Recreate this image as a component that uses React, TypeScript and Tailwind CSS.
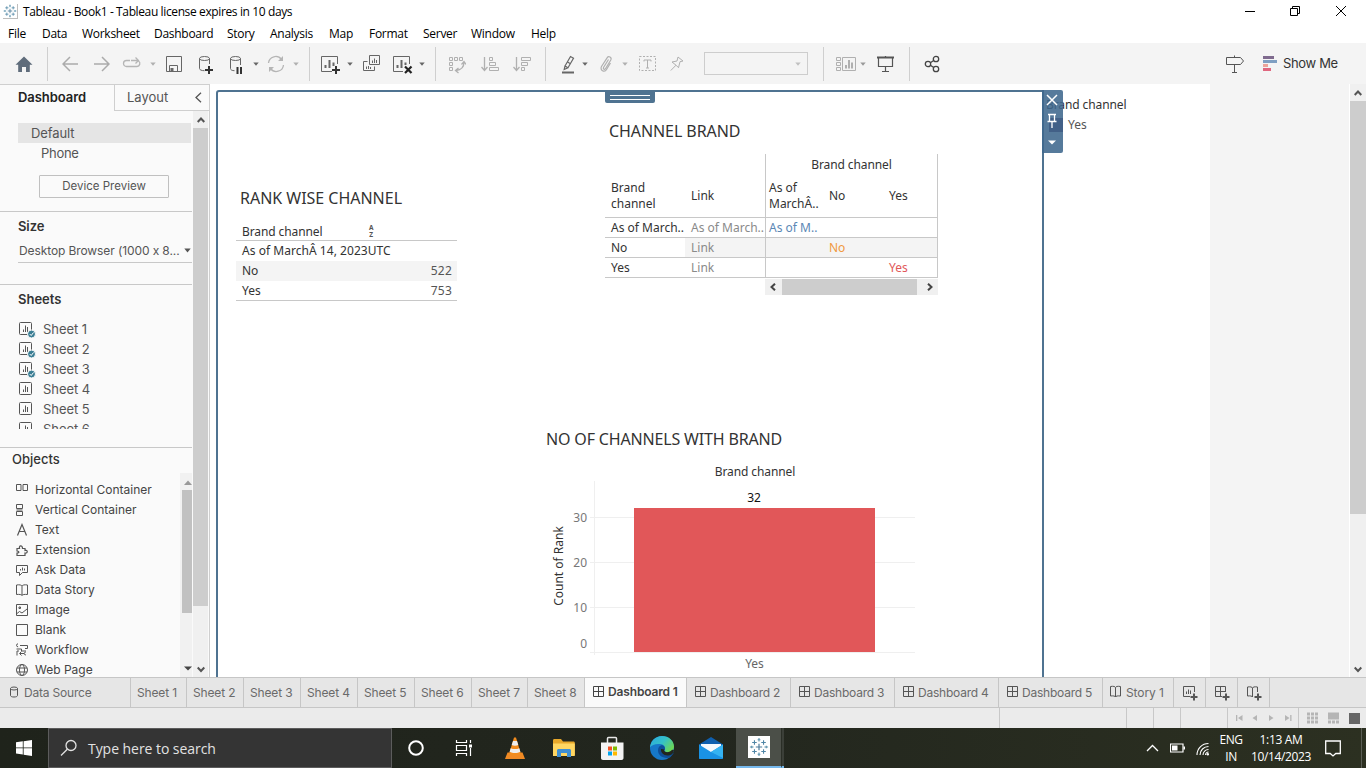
import type { ReactNode } from "react";

type IconProps = { w: number; h?: number; className?: string; children: ReactNode };

function Icon({ w, h = 20, className = "", children }: IconProps) {
  return (
    <svg
      width={w}
      height={h}
      viewBox={`0 0 ${w} ${h}`}
      fill="none"
      stroke="currentColor"
      strokeWidth={1}
      className={`block shrink-0 ${className}`}
    >
      {children}
    </svg>
  );
}

function Caret({ className = "" }: { className?: string }) {
  return (
    <Icon w={6} h={4} className={className}>
      <path d="M.3.5h5.4L3 3.7z" fill="currentColor" stroke="none" />
    </Icon>
  );
}

function Sep({ className = "" }: { className?: string }) {
  return <div className={`h-[34px] w-px shrink-0 bg-[#cfcfcf] ${className}`} />;
}

function Plus({ x, y }: { x: number; y: number }) {
  return <path d={`M${x - 4} ${y}h8M${x} ${y - 4}v8`} strokeWidth={2} stroke="#333" />;
}

function TableauMark({ size, className = "" }: { size: number; className?: string }) {
  return (
    <svg width={size} height={size} viewBox="0 0 22 22" fill="none" className={`block shrink-0 ${className}`}>
      <path d="M11 7.500v7M7.500 11h7" stroke="#4a7a9a" strokeWidth="1.300" />
      <path d="M11 1v4M9.500 3h3M11 17v4M9.500 19h3M1 11h4M3 9.500v3M17 11h4M19 9.500v3" stroke="#5d93ad" strokeWidth="1.200" />
      <path d="M6 3.500v5M3.500 6h5M16 3.500v5M13.500 6h5M6 13.500v5M3.500 16h5M16 13.500v5M13.500 16h5" stroke="#4f86a6" strokeWidth="1.200" />
    </svg>
  );
}

function TitleBar() {
  return (
    <header className="flex h-[22px] shrink-0 items-center bg-white pl-[3px]">
      <div className="flex size-[15px] items-center justify-center border-r border-b border-[#bdbdbd]">
        <TableauMark size={14} />
      </div>
      <div className="ml-[5px] pt-px font-[Open_Sans,sans-serif] text-[12px] tracking-[-0.38px] whitespace-nowrap text-black">
        Tableau - Book1 - Tableau license expires in 10 days
      </div>
      <div className="ml-auto flex items-center pr-[20px] text-black">
        <Icon w={10} h={12}>
          <path d="M0 6.500h10" />
        </Icon>
        <Icon w={10} h={12} className="ml-[35px]">
          <path d="M.5 3.500h7v7h-7zM2.500 3.500v-2h7v7h-2" />
        </Icon>
        <Icon w={10} h={12} className="ml-[36px]">
          <path d="M0 1l10 10M10 1L0 11" />
        </Icon>
      </div>
    </header>
  );
}

const MENU: [string, string][] = [
  ["File", "w-[34px]"],
  ["Data", "w-[40px]"],
  ["Worksheet", "w-[72px]"],
  ["Dashboard", "w-[73px]"],
  ["Story", "w-[43px]"],
  ["Analysis", "w-[59px]"],
  ["Map", "w-[40px]"],
  ["Format", "w-[54px]"],
  ["Server", "w-[48px]"],
  ["Window", "w-[60px]"],
  ["Help", "w-[40px]"],
];

function MenuBar() {
  return (
    <nav className="flex h-[21px] shrink-0 items-center bg-white pt-[2px] pl-[8px] font-[Open_Sans,sans-serif] text-[12px] tracking-[-0.28px] text-black">
      {MENU.map(([label, w]) => (
        <div key={label} className={`shrink-0 whitespace-nowrap ${w}`}>
          {label}
        </div>
      ))}
    </nav>
  );
}

function Toolbar() {
  return (
    <div className="flex h-[41px] shrink-0 items-center bg-[#f4f4f4] pt-px text-[#666]">
      <Icon w={20} className="ml-[14px] text-[#5f6c7b]">
        <path d="M10 2.500l8.500 8.200h-2.700v7.300h-3.800v-5h-4v5h-3.800v-7.300h-2.700z" fill="currentColor" stroke="none" />
      </Icon>
      <Sep className="ml-[13px]" />
      <Icon w={16} className="ml-[14px] text-[#ababab]">
        <path d="M16 10H1M8 3l-7 7 7 7" strokeWidth={1.500} />
      </Icon>
      <Icon w={16} className="ml-[16px] text-[#ababab]">
        <path d="M0 10h15M8 3l7 7-7 7" strokeWidth={1.500} />
      </Icon>
      <Icon w={20} className="ml-[12px] text-[#b5b5b5]">
        <path d="M8 6.500H4.500a3 3 0 0 0 0 6H15a3 3 0 0 0 1.500-5.500M9 6.500h7M13.500 3.500l3 3-3 3" strokeWidth={1.300} />
      </Icon>
      <Caret className="ml-[8px] text-[#b0b0b0]" />
      <Icon w={16} className="ml-[10px]">
        <path d="M.5 2.500h15v15H.5zM3.500 17v-5.500h8V17" />
        <path d="M4.500 14h3v3h-3z" fill="currentColor" stroke="none" />
      </Icon>
      <Icon w={16} className="ml-[16px]">
        <path d="M1.500 4.500v10c0 1.300 2 2.200 5 2.200M11.500 4.500V10" />
        <ellipse cx="6.500" cy="4.500" rx="5" ry="2" />
        <Plus x={11} y={16} />
      </Icon>
      <Icon w={14} className="ml-[15px]">
        <path d="M1.500 4.500v10c0 1.300 1.500 2.200 4 2.200M11.500 4.500V11" />
        <ellipse cx="6.500" cy="4.500" rx="5" ry="2" />
        <path d="M8.500 13v7M12 13v7" stroke="#333" strokeWidth={2} />
      </Icon>
      <Caret className="ml-[10px] text-[#666]" />
      <Icon w={18} className="ml-[8px] text-[#b5b5b5]">
        <path d="M1.500 9A7.200 7.200 0 0 1 14.500 5.500M16.500 11A7.200 7.200 0 0 1 3.500 14.500" strokeWidth={1.300} />
        <path d="M16 2v5h-5zM2 18v-5h5z" fill="currentColor" stroke="none" />
      </Icon>
      <Caret className="ml-[8px] text-[#b0b0b0]" />
      <Sep className="ml-[10px]" />
      <Icon w={20} className="ml-[11px]">
        <path d="M16.500 10V2.500H.500v15H11" />
        <path d="M4.500 14v-3M8.500 14V6M12.500 12V8.500" strokeWidth={2} />
        <Plus x={15} y={16} />
      </Icon>
      <Caret className="ml-[6px] text-[#666]" />
      <Icon w={18} className="ml-[10px]">
        <path d="M6.500 1.500h10v9h-10zM4.500 7.500h-4v9h11v-4" />
        <path d="M9.500 9V6.500M11.500 9V4.500M13.500 9V6M3.500 15v-2.500M5.500 15v-3M7.500 15v-2" />
      </Icon>
      <Icon w={20} className="ml-[12px]">
        <path d="M16.500 10V2.500H.500v15H10" />
        <path d="M4.500 14v-3M8.500 14V6M12.500 11V8.500" strokeWidth={2} />
        <path d="M12 12.500l6.500 6.500M18.500 12.500L12 19" stroke="#222" strokeWidth={2.200} />
      </Icon>
      <Caret className="ml-[6px] text-[#666]" />
      <Sep className="ml-[10px]" />
      <Icon w={18} className="ml-[12px] text-[#b0b0b0]">
        <path d="M1.500 3.500h3v3h-3zM6.500 3.500h3v3h-3zM11.500 3.500h3v3h-3zM1.500 8.500h3v3h-3zM1.500 13.500h3v3h-3z" />
        <path d="M16 8c0 5-3 8-8 8.500M13.500 10.500L16 7.500l2 3M10.500 14l-3 2.500 3 2.500" strokeWidth={1.300} />
      </Icon>
      <Icon w={18} className="ml-[15px] text-[#b0b0b0]">
        <path d="M3.500 3v13.500M.500 13l3 3.500 3-3.500" strokeWidth={1.300} />
        <path d="M8.500 3.500h3v3h-3zM8.500 8.500h6v3h-6zM8.500 13.500h9v3h-9z" />
      </Icon>
      <Icon w={18} className="ml-[14px] text-[#b0b0b0]">
        <path d="M3.500 3v13.500M.500 13l3 3.500 3-3.500" strokeWidth={1.300} />
        <path d="M8.500 3.500h9v3h-9zM8.500 8.500h6v3h-6zM8.500 13.500h3v3h-3z" />
      </Icon>
      <Sep className="ml-[14px]" />
      <Icon w={14} className="ml-[15px]">
        <path d="M4 12l5.500-9.500 3 1.700L7 13.700zM4 12l-.800 3.500 3.800-1.800M6.500 8l3 1.700" strokeWidth={1.200} />
        <path d="M1 18.500h12" strokeWidth={2} />
      </Icon>
      <Caret className="ml-[7px] text-[#666]" />
      <Icon w={14} className="ml-[11px] text-[#b0b0b0]">
        <path
          d="M9.500 5.500L4.500 13.500c-.7 1.500 1.200 2.500 2.100 1l5.200-8.500c1.300-2.700-2.200-4.500-3.700-2.200L2.500 12.500c-2 3.700 3 6.500 5.200 2.700l3.800-6.200"
          strokeWidth={1.200}
        />
      </Icon>
      <Caret className="ml-[9px] text-[#b0b0b0]" />
      <Icon w={18} className="ml-[11px] text-[#b0b0b0]">
        <path d="M.500 2.500h16v14H.500z" strokeDasharray="2 1.500" />
        <path d="M5 7.500V6h7v1.500M8.500 6v8M7 14h3" />
      </Icon>
      <Icon w={14} className="ml-[13px] text-[#b0b0b0]">
        <path d="M8 3l5 4-3 .700-1.500 6L6 11.200.800 16.500M6 11.200L2 8l5-1 1-4" />
      </Icon>
      <div className="mb-px ml-[20px] flex h-[23px] w-[104px] shrink-0 items-center justify-end border border-[#cdcdcd] pr-[6px]">
        <Caret className="text-[#c0c0c0]" />
      </div>
      <Sep className="ml-[15px]" />
      <Icon w={20} className="ml-[12px] text-[#b0b0b0]">
        <path d="M.500 3.500h4v3h-4zM.500 8.500h4v3h-4zM.500 13.500h4v3h-4zM6.500 3.500h13v13h-13z" />
        <path d="M10 14.500V11M13 14.500V6M16 14.500V8.500" strokeWidth={2} />
      </Icon>
      <Caret className="ml-[4px] text-[#999]" />
      <Icon w={18} className="ml-[11px] text-[#555]">
        <path d="M0 3.500h17" strokeWidth={2} />
        <path d="M1.500 4v8.500h14V4M8.500 12.500v5M5 17.500h7M8.500 2v1" strokeWidth={1.200} />
      </Icon>
      <Sep className="ml-[14px]" />
      <Icon w={18} className="ml-[14px] text-[#444]">
        <circle cx="4" cy="10" r="2.700" strokeWidth={1.300} />
        <circle cx="12" cy="5" r="2.700" strokeWidth={1.300} />
        <circle cx="12" cy="15" r="2.700" strokeWidth={1.300} />
        <path d="M6.400 8.700l3.300-2.200M6.400 11.300l3.300 2.200" strokeWidth={1.300} />
      </Icon>
      <Icon w={18} className="ml-[284px] text-[#555]">
        <path d="M.500 3.500h14l3 3.500-3 3.500H.500zM8.500 1.500v2M8.500 10.500v8M6 18.500h5" />
      </Icon>
      <Icon w={14} className="ml-[19px]">
        <path d="M0 3.500h11" stroke="#7f6a8e" strokeWidth={3} />
        <path d="M0 7.500h14" stroke="#7f9fc2" strokeWidth={3} />
        <path d="M0 11.500h5" stroke="#eba49a" strokeWidth={3} />
        <path d="M0 15.500h8" stroke="#e0677f" strokeWidth={3} />
      </Icon>
      <div className="ml-[6px] font-[Inter,sans-serif] text-[13px] tracking-[-0.35px] whitespace-nowrap text-[#333]">Show Me</div>
    </div>
  );
}

function SheetIcon({ checked }: { checked?: boolean }) {
  return (
    <Icon w={18} h={18} className="text-[#555]">
      <rect x=".500" y="2.500" width="12" height="12" rx="1" />
      <path d="M4.500 12V9.500M6.500 12V5.500M8.500 12V7" />
      {checked && (
        <>
          <circle cx="12.500" cy="14" r="4" fill="#3a7d93" stroke="#fafafa" />
          <path d="M10.700 14l1.500 1.500 2.300-3" stroke="#fff" />
        </>
      )}
    </Icon>
  );
}

const OBJECTS: [string, ReactNode][] = [
  ["Horizontal Container", <path key="p" d="M.500 1.500h4.500v6H.500zM7 1.500h4.500v6H7z" />],
  ["Vertical Container", <path key="p" d="M.500 1.500h6v4h-6zM.500 8.500h6v4h-6zM.500 7h6" />],
  ["Text", <path key="p" d="M1.500 12.500L6 1.500l4.500 11M3 8.500h6" strokeWidth={1.200} />],
  ["Extension", <path key="p" d="M1 5.500h2.500c-1-3 3-4 3 0H9V7.500c3-1 3 3 0 2.500v2.500H1V10c2.500 0 2.500-2 0-2z" strokeWidth={1.200} />],
  ["Ask Data", <path key="p" d="M.500 2.500h11v7h-5l-3 3v-3h-3zM4.500 7.500V6M6.500 7.500V4.500M8.500 7.500V5.500" />],
  ["Data Story", <path key="p" d="M.500 2c3-.500 5 0 5.500 1 .500-1 2.500-1.500 5.500-1v9.500c-3-.300-5 0-5.500 1-.500-1-2.500-1.300-5.500-1zM6 3v9.500" />],
  ["Image", <path key="p" d="M.500 1.500h11v11H.500zM1 10.500l2.500-2 2.500 1.500L11 6M3 4h1.500v1.500H3z" />],
  ["Blank", <path key="p" d="M.500 1.500h11v11H.500z" />],
  ["Workflow", <path key="p" d="M4 2.500h7.500v3H9M.500 6h5v2H10M1 12.500V8h2M2 .800a1.500 1.500 0 1 0 .1 3M5.500 12.500l-2-2 2-2M4 10.500h4M9.800 9a1.500 1.500 0 1 0 .1 3" />],
  [
    "Web Page",
    <g key="p">
      <circle cx="6" cy="7" r="5.500" />
      <ellipse cx="6" cy="7" rx="2.500" ry="5.500" />
      <path d="M1 5h10M1 9h10" />
    </g>,
  ],
];

function Chevron({ d, className = "" }: { d: string; className?: string }) {
  return (
    <Icon w={8} h={8} className={className}>
      <path d={d} strokeWidth={2} />
    </Icon>
  );
}

const UP = "M.700 6L4 2.500 7.300 6";
const DOWN = "M.700 2.500L4 6l3.300-3.500";

function Sidebar() {
  return (
    <aside className="flex w-[210px] shrink-0 flex-col border-t border-r border-[#cfcfcf] bg-[#fafafa] font-[Inter,sans-serif] text-[#555]">
      <div className="flex h-[26px] shrink-0 text-[13px]">
        <div className="w-[114px] pl-[18px] leading-[25px] font-semibold tracking-[-0.05px] text-[#222]">Dashboard</div>
        <div className="flex flex-1 items-center border-b border-l border-[#cfcfcf] pr-[7px] pl-[12px]">
          <span className="leading-[25px]">Layout</span>
          <Icon w={7} h={11} className="ml-auto text-[#555]">
            <path d="M6 .800L1 5.500l5 4.700" strokeWidth={1.300} />
          </Icon>
        </div>
      </div>
      <div className="flex min-h-0 flex-1">
        <div className="flex w-[192px] shrink-0 flex-col overflow-hidden">
          <div className="mt-[12px] mr-px ml-[18px] h-[20px] shrink-0 bg-[#e5e5e5] pl-[13px] text-[13px] leading-[20px] tracking-[-0.1px]">
            Default
          </div>
          <div className="h-[20px] shrink-0 pl-[41px] text-[13px] leading-[20px] tracking-[-0.3px]">Phone</div>
          <div className="mt-[12px] ml-[39px] h-[23px] w-[130px] shrink-0 rounded-[1px] border border-[#c0c0c0] text-center text-[11.500px] leading-[20px]">
            Device Preview
          </div>
          <div className="mt-[13px] h-px shrink-0 bg-[#c8c8c8]" />
          <div className="mt-[4px] mb-px h-[20px] shrink-0 pl-[18px] text-[13px] leading-[20px] font-semibold tracking-[-0.1px] text-[#333]">
            Size
          </div>
          <div className="ml-[18px] flex h-[26px] shrink-0 items-center justify-between border-b border-[#c8c8c8] pt-[2px] pl-[1px] text-[12px]">
            <span className="tracking-[-0.1px] whitespace-nowrap [font-feature-settings:'calt'_0]">Desktop Browser (1000 x 8...</span>
            <Icon w={8} h={5}>
              <path d="M.300.500h6.400L3.500 4.500z" fill="currentColor" stroke="none" />
            </Icon>
          </div>
          <div className="mt-[21px] h-px shrink-0 bg-[#c8c8c8]" />
          <div className="mt-[4px] mb-px h-[20px] shrink-0 pl-[18px] text-[13px] leading-[20px] font-semibold text-[#333]">Sheets</div>
          <div className="mt-[9px] h-[110px] shrink-0 overflow-hidden">
            {[1, 2, 3, 4, 5, 6].map((n) => (
              <div key={n} className="flex h-[20px] items-center pl-[19px] text-[13px]">
                <SheetIcon checked={n < 4} />
                <span className="ml-[6px] leading-[20px] tracking-[-0.05px]">Sheet {n}</span>
              </div>
            ))}
          </div>
          <div className="mt-[18px] h-px shrink-0 bg-[#c8c8c8]" />
          <div className="mt-px mb-px h-[20px] shrink-0 pl-[12px] text-[13px] leading-[20px] font-medium text-[#333]">Objects</div>
          <div className="mt-[3px] flex min-h-0 flex-1">
            <div className="mt-[7px] flex-1 overflow-hidden text-[#444]">
              {OBJECTS.map(([label, icon]) => (
                <div key={label} className="flex h-[20px] items-center pl-[16px] text-[12px]">
                  <Icon w={13} h={14} className="text-[#555]">
                    {icon}
                  </Icon>
                  <span className="ml-[6px] leading-[20px] whitespace-nowrap">{label}</span>
                </div>
              ))}
            </div>
            <div className="flex w-[12px] shrink-0 flex-col items-end bg-[#f1f1f1]">
              <Icon w={8} h={5} className="mt-[7px] text-[#999]">
                <path d="M0 5l4-4.500L8 5z" fill="currentColor" stroke="none" />
              </Icon>
              <div className="mt-[5px] h-[123px] w-[10px] bg-[#c1c1c1]" />
              <Icon w={8} h={5} className="mt-auto mb-[6px] text-[#444]">
                <path d="M0 .500h8L4 4.500z" fill="currentColor" stroke="none" />
              </Icon>
            </div>
          </div>
        </div>
        <div className="ml-px flex w-[15px] flex-col items-center bg-[#f0f0f0]">
          <Chevron d={UP} className="mt-[5px] text-[#555]" />
          <div className="mt-[4px] h-[478px] w-full bg-[#cdcdcd]" />
          <Chevron d={DOWN} className="mt-auto mb-[4px] text-[#555]" />
        </div>
      </div>
    </aside>
  );
}

function RankTable() {
  return (
    <section className="mt-[104px] ml-[26px] w-[221px] shrink-0 text-[12px]">
      <h2 className="h-[20px] pl-[4px] text-[16px] leading-[20px] tracking-[-0.02px] whitespace-nowrap">RANK WISE CHANNEL</h2>
      <div className="mt-[14px] flex h-[19px] items-center border-b border-[#c8c8c8] pl-[6px]">
        <span className="w-[127px] leading-[19px] tracking-[-0.1px]">Brand channel</span>
        <span className="flex flex-col items-center text-[6.500px] leading-none font-bold text-[#555]">
          <span className="h-[7px] leading-[7px]">A</span>
          <span className="h-[7px] leading-[7px]">Z</span>
        </span>
      </div>
      <div className="h-[20px] pl-[6px] leading-[20px] tracking-[0.04px] whitespace-nowrap">As of MarchÂ 14, 2023UTC</div>
      <div className="flex h-[20px] justify-between bg-[#f4f4f4] pr-[5px] pl-[6px] leading-[20px]">
        <span>No</span>
        <span className="text-[#555] tracking-[0.2px]">522</span>
      </div>
      <div className="flex h-[20px] justify-between border-b border-[#c8c8c8] pr-[5px] pl-[6px] leading-[20px]">
        <span>Yes</span>
        <span className="text-[#555] tracking-[0.2px]">753</span>
      </div>
    </section>
  );
}

const cell = "h-full shrink-0 whitespace-nowrap leading-[19px]";

function BrandTable() {
  return (
    <section className="mt-[37px] ml-[148px] w-[333px] shrink-0 text-[12px]">
      <h2 className="h-[20px] pl-[4px] text-[16px] leading-[20px] tracking-[-0.08px] whitespace-nowrap">CHANNEL BRAND</h2>
      <div className="mt-[13px] flex h-[64px] border-b border-[#c8c8c8]">
        <div className="flex w-[160px] items-end pb-[5px] pl-[6px] leading-[16px]">
          <div className="w-[80px]">
            Brand
            <br />
            channel
          </div>
          <div className="pb-[8px]">Link</div>
        </div>
        <div className="flex-1 border-x border-[#c8c8c8]">
          <div className="h-[26px] pt-[2px] text-center leading-[18px] tracking-[-0.1px]">Brand channel</div>
          <div className="flex items-center pl-[3px] leading-[16px] whitespace-nowrap">
            <div className="w-[60px]">
              As of
              <br />
              MarchÂ..
            </div>
            <div className="w-[60px]">No</div>
            <div>Yes</div>
          </div>
        </div>
      </div>
      <div className="flex h-[20px] border-b border-[#c8c8c8]">
        <div className={`${cell} w-[80px] pl-[6px]`}>As of March..</div>
        <div className={`${cell} w-[80px] pl-[6px] text-[#8a8a8a]`}>As of March..</div>
        <div className={`${cell} w-[173px] border-x border-[#c8c8c8] pl-[3px] text-[#5b87b5]`}>As of M..</div>
      </div>
      <div className="flex h-[20px] border-b border-[#c8c8c8]">
        <div className={`${cell} w-[80px] pl-[6px]`}>No</div>
        <div className={`${cell} w-[80px] bg-[#f4f4f4] pl-[6px] text-[#8a8a8a]`}>Link</div>
        <div className={`${cell} w-[173px] border-x border-[#c8c8c8] bg-[#f4f4f4] pl-[63px] text-[#f0993f]`}>No</div>
      </div>
      <div className="flex h-[20px] border-b border-[#c8c8c8]">
        <div className={`${cell} w-[80px] pl-[6px]`}>Yes</div>
        <div className={`${cell} w-[80px] pl-[6px] text-[#8a8a8a]`}>Link</div>
        <div className={`${cell} w-[173px] border-x border-[#c8c8c8] pl-[123px] text-[#e15759]`}>Yes</div>
      </div>
      <div className="mt-px ml-[160px] flex h-[16px] items-center bg-[#f0f0f0] text-[#444]">
        <Chevron d="M6 .700L2.500 4 6 7.300" className="ml-[4px]" />
        <div className="ml-[5px] h-full w-[135px] bg-[#cdcdcd]" />
        <Chevron d="M2 .700L5.500 4 2 7.300" className="ml-[9px]" />
      </div>
    </section>
  );
}

function CountChart() {
  return (
    <section className="ml-[336px] w-[380px]">
      <h2 className="h-[20px] text-[16px] leading-[20px] tracking-[-0.16px] whitespace-nowrap">NO OF CHANNELS WITH BRAND</h2>
      <svg width="380" height="228" viewBox="0 -1 380 228" className="block text-[12px]">
        <path d="M48.500 31v174M44 67.500h325M44 112.500h325M44 157.500h325M44 202.500h325" stroke="#efefef" fill="none" />
        <rect x="88" y="58" width="241" height="144" fill="#e15759" />
        <g textAnchor="middle" fill="#333">
          <text x="209" y="26" letterSpacing="-0.1">Brand channel</text>
          <text x="208" y="52" fill="#111">32</text>
          <text x="208.500" y="218" fill="#666">Yes</text>
          <text transform="translate(16.500 116) rotate(-90)">Count of Rank</text>
        </g>
        <g textAnchor="end" fill="#777">
          <text x="41" y="72">30</text>
          <text x="41" y="117">20</text>
          <text x="41" y="162">10</text>
          <text x="41" y="198">0</text>
        </g>
      </svg>
    </section>
  );
}

function Canvas() {
  return (
    <main className="relative w-[1000px] shrink-0 overflow-hidden bg-white font-[Noto_Sans,sans-serif] text-[#333]">
      <div className="flex h-[345px] items-start">
        <RankTable />
        <BrandTable />
        <section className="mt-[11px] ml-[108px] text-[12px] leading-[20px] whitespace-nowrap">
          <div className="tracking-[-0.1px]">Brand channel</div>
          <div className="flex items-center">
            <div className="ml-[3px] size-[14px] bg-[#5a2f59]" />
            <span className="ml-[5px] text-[#555]">Yes</span>
          </div>
        </section>
      </div>
      <CountChart />
      <div className="pointer-events-none absolute top-[6px] left-[6px] h-[600px] w-[828px] rounded-tl-[3px] border-2 border-[#4f7391]" />
      <div className="absolute top-[6px] left-[395px] flex h-[13px] w-[50px] flex-col items-center rounded-b-[2px] bg-[#4f7391] pt-[5px]">
        <div className="h-px w-[40px] bg-white" />
        <div className="mt-[3px] h-px w-[40px] bg-white" />
      </div>
      <div className="absolute top-[6px] left-[832px] flex h-[63px] w-[21px] flex-col items-center rounded-r-[2px] bg-[#3f688d]/88 text-white">
        <Icon w={12} h={12} className="mt-[4px] mr-[2px]">
          <path d="M1 1l10 10M11 1L1 11" strokeWidth={1.500} />
        </Icon>
        <Icon w={10} h={15} className="mt-[7px] mr-[1px]">
          <path d="M1 1.500h8M2.500 2v6M7.500 2v6M.500 8.500h9M5 8.500V15" strokeWidth={1.300} />
        </Icon>
        <Icon w={8} h={5} className="mt-[12px] mr-[1px]">
          <path d="M0 .500h8L4 4.500z" fill="currentColor" stroke="none" />
        </Icon>
      </div>
    </main>
  );
}

const gridPath = "M.500 1.500h10v10H.500zM5.500 1.500v10M.500 6.500h10";
const bookPath = "M.500 1.500c3-.500 4.500 0 5 1 .500-1 2-1.500 5-1v9.500c-3-.300-4.500 0-5 1-.500-1-2-1.300-5-1zM5.500 2.500v9.500";

const SHEET_TABS: [string, string][] = [
  ["Sheet 1", "w-[56px]"],
  ["Sheet 2", "w-[57px]"],
  ["Sheet 3", "w-[57px]"],
  ["Sheet 4", "w-[57px]"],
  ["Sheet 5", "w-[57px]"],
  ["Sheet 6", "w-[57px]"],
  ["Sheet 7", "w-[56px]"],
  ["Sheet 8", "w-[57px]"],
];

function SheetTabs() {
  const edge = "flex h-full shrink-0 items-center border-r border-[#c6c6c6] whitespace-nowrap";
  return (
    <div className="flex h-[31px] shrink-0 border-y border-[#c6c6c6] bg-[#e6e6e6] font-[Inter,sans-serif] text-[12px] text-[#6a6a6a]">
      <div className={`${edge} w-[131px] pl-[9px] tracking-[-0.2px]`}>
        <Icon w={10} h={12} className="mb-[2px] text-[#555]">
          <path d="M1.500 2.500v7c0 .800 1.300 1.500 3.500 1.500s3.500-.700 3.500-1.500v-7" />
          <ellipse cx="5" cy="2.500" rx="3.500" ry="1.500" />
        </Icon>
        <span className="ml-[5px]">Data Source</span>
      </div>
      {SHEET_TABS.map(([label, w]) => (
        <div key={label} className={`${edge} ${w} pl-[6px] tracking-[-0.15px]`}>
          {label}
        </div>
      ))}
      <div className={`${edge} w-[102px] bg-[#fafafa] pb-[2px] pl-[8px] font-semibold tracking-[-0.15px] text-[#444]`}>
        <Icon w={11} h={13}>
          <path d={gridPath} />
        </Icon>
        <span className="ml-[4px]">Dashboard 1</span>
      </div>
      {[2, 3, 4, 5].map((n) => (
        <div key={n} className={`${edge} w-[104px] pl-[8px] tracking-[-0.22px]`}>
          <Icon w={11} h={13} className="mb-[2px] text-[#555]">
            <path d={gridPath} />
          </Icon>
          <span className="ml-[4px]">Dashboard {n}</span>
        </div>
      ))}
      <div className={`${edge} w-[71px] pl-[7px] tracking-[-0.1px]`}>
        <Icon w={12} h={13} className="mb-[2px] text-[#555]">
          <path d={bookPath} />
        </Icon>
        <span className="ml-[4px]">Story 1</span>
      </div>
      <div className={`${edge} w-[32px] pl-[9px] text-[#555]`}>
        <Icon w={16} h={16}>
          <path d="M11.500 7V1.500H.500v10H7M3.500 9V6.500M5.500 9V4.500M7.500 9V5.500" />
          <path d="M7.500 12h7M11 8.500v7" strokeWidth={2} />
        </Icon>
      </div>
      <div className={`${edge} w-[32px] pl-[9px] text-[#555]`}>
        <Icon w={16} h={16}>
          <path d="M10.500 7V1.500H.500v10H7M5.500 1.500v10M.500 6.500h10" />
          <path d="M7.500 12h7M11 8.500v7" strokeWidth={2} />
        </Icon>
      </div>
      <div className={`${edge} w-[32px] pl-[9px] text-[#555]`}>
        <Icon w={16} h={16}>
          <path d="M5.500 12c-.500-1-2-1.300-5-1V2c3-.500 4.500 0 5 1 .500-1 2-1.500 5-1v5M5.500 3v9" />
          <path d="M7.500 12h7M11 8.500v7" strokeWidth={2} />
        </Icon>
      </div>
    </div>
  );
}

function StatusBar() {
  const s = "h-full w-px shrink-0 bg-[#c8c8c8]";
  return (
    <div className="flex h-[20px] shrink-0 items-center bg-[#ebebeb] text-[#b5b5b5]">
      <div className={`${s} ml-[999px]`} />
      <div className={`${s} ml-[126px]`} />
      <div className={`${s} ml-[26px]`} />
      <div className={`${s} ml-[26px]`} />
      <div className={`${s} ml-[46px]`} />
      <Icon w={58} h={8} className="ml-[7px]">
        <path d="M1 1h1.300v6H1zM7.500 1v6L3 4zM22 1v6l-4.500-3zM34 1v6l4.500-3zM50 1v6l4.500-3zM55.200 1h1.300v6h-1.300z" fill="currentColor" stroke="none" />
      </Icon>
      <div className={`${s} ml-[5px]`} />
      <Icon w={11} h={12} className="ml-[8px]">
        <path d="M0 2h11M0 6h11M0 10h11" strokeWidth={3} strokeDasharray="3 1" />
      </Icon>
      <Icon w={11} h={12} className="ml-[10px]">
        <path d="M0 .500h11v7H0z" fill="currentColor" stroke="none" />
        <path d="M0 10h11" strokeWidth={3} strokeDasharray="3 1" />
      </Icon>
      <div className="ml-[10px] size-[11px] bg-[#666]" />
    </div>
  );
}

function Taskbar() {
  return (
    <footer className="flex h-[40px] shrink-0 items-center bg-linear-to-r from-[#1f231b] via-[#22261e] to-[#2c3021] font-[Open_Sans,sans-serif] text-white">
      <div className="flex h-full w-[48px] shrink-0 items-center justify-center">
        <svg width="16" height="16" viewBox="0 0 16 16" fill="#fff">
          <path d="M0 2.300l6.800-1v6.200H0zM7.600 1.200L16 0v7.500H7.600zM0 8.300h6.800v6.300l-6.800-1zM7.600 8.300H16V16l-8.400-1.200z" />
        </svg>
      </div>
      <div className="flex h-full w-[344px] shrink-0 items-center border border-[#5c5c5c] bg-[#343434] pl-[11px] text-[#e2e2e2]">
        <Icon w={18} h={18}>
          <circle cx="11" cy="6.500" r="5" strokeWidth={1.300} />
          <path d="M7.300 10.200L1 16.500" strokeWidth={1.300} />
        </Icon>
        <span className="ml-[10px] text-[14px] tracking-[-0.05px] whitespace-nowrap">Type here to search</span>
      </div>
      <svg width="16" height="16" viewBox="0 0 16 16" className="ml-[16px] shrink-0">
        <circle cx="8" cy="8" r="6.800" fill="none" stroke="#fff" strokeWidth="2" />
      </svg>
      <Icon w={18} h={16} className="ml-[31px]">
        <path d="M1.500 0v2.500h10V0M1.500 16v-2.500h10V16M1.500 5.500h10v5h-10zM15.500 0v3M15.500 8v8" strokeWidth={1.200} />
        <path d="M14 4.500h3v3h-3z" fill="currentColor" stroke="none" />
      </Icon>
      <svg width="20" height="24" viewBox="0 0 20 24" className="ml-[32px] shrink-0">
        <path d="M2.500 16.500h15L20 23H0z" fill="#f08a24" />
        <path d="M9 1.500h2l5 16.500c-3 2-9 2-12 0z" fill="#f28c1e" />
        <path d="M8 5h4l1.300 4c-2 .900-4.600.900-6.600 0zM5.700 12.200c2.600 1.200 6 1.200 8.600 0l1.100 3.500c-3 1.700-7.800 1.700-10.800 0z" fill="#eee" />
      </svg>
      <svg width="22" height="20" viewBox="0 0 22 20" className="ml-[28px] shrink-0">
        <path d="M0 2.500C0 1.700.500 1 1.300 1H8l2 2.500h10.500c.800 0 1.300.600 1.300 1.300V17H0z" fill="#e8a82b" />
        <path d="M0 5.500h21.800V18H0z" fill="#ffd662" />
        <path d="M4 19v-6.500C4 11.700 4.700 11 5.500 11h11c.800 0 1.500.700 1.500 1.500V19h-4v-4H8v4z" fill="#3f8fd2" />
      </svg>
      <svg width="24" height="25" viewBox="0 0 24 25" className="ml-[25px] shrink-0">
        <path d="M7.500 8V2.500c0-.600.400-1 1-1h7c.600 0 1 .400 1 1V8" fill="none" stroke="#e8e8e8" strokeWidth="1.500" />
        <path d="M1 6.500h22.500V22c0 1.200-.800 2-2 2H3c-1.200 0-2-.800-2-2z" fill="#f3f3f3" />
        <path d="M8 10.500h4v4H8z" fill="#f25022" />
        <path d="M13 10.500h4v4h-4z" fill="#7fba00" />
        <path d="M8 15.500h4v4H8z" fill="#00a4ef" />
        <path d="M13 15.500h4v4h-4z" fill="#ffb900" />
      </svg>
      <svg width="24" height="24" viewBox="0 0 24 24" className="ml-[26px] shrink-0">
        <defs>
          <linearGradient id="edgeTop" x1="0" y1="0" x2="1" y2="0.600">
            <stop offset="0" stopColor="#2aa9e0" />
            <stop offset="0.550" stopColor="#35c1c8" />
            <stop offset="1" stopColor="#6bd657" />
          </linearGradient>
        </defs>
        <circle cx="12" cy="12" r="12" fill="#1678c9" />
        <path d="M0 11.500C.500 5 5.500 0 12 0c7 0 12 5 12 10.500 0 4-3 6-6 6-2.500 0-4-1-3.500-2.200C16 12 14.500 8 10 8 5.500 7.500 1.500 9 0 11.500z" fill="url(#edgeTop)" />
        <path d="M8 14.500c0-3 1.500-5 4-5.500 3 1 3.500 4 2.500 5.300-.500 1.200 1 2.200 3.500 2.200 1.500 0 3-.500 4-1.300l1.500 2.300-3.500 4c-6 1.500-12-1.500-12-7z" fill="#0e4e98" />
        <path d="M11 13c-.500 3.500 2.500 6.500 6.500 6.500 2 0 4-.700 5-1.800l1.500-3.700-2-.200c-1.500 2-5 3.200-7.200 1.800-1-.600-1-1.200-.300-2z" fill="#22261e" />
      </svg>
      <svg width="24" height="22" viewBox="0 0 24 22" className="ml-[25px] shrink-0">
        <path d="M0 7.500L12 0l12 7.500V21c0 .500-.500 1-1 1H1c-.500 0-1-.500-1-1z" fill="#0f5fae" />
        <path d="M2 7h20v7l-10 4L2 14z" fill="#f4f8fc" />
        <path d="M0 7.500l12 7.500 12-7.500V21c0 .500-.500 1-1 1H1c-.500 0-1-.500-1-1z" fill="#1a92e4" />
        <path d="M3 7.500h18l-9 6z" fill="#f4f8fc" />
        <path d="M24 7.500V21L12 15z" fill="#35b3f2" />
      </svg>
      <div className="ml-[13px] flex h-full w-[45px] shrink-0 items-center justify-center border-b-2 border-[#76b9ed] bg-[#4b4f48]">
        <div className="flex size-[22px] items-center justify-center bg-white">
          <TableauMark size={20} />
        </div>
      </div>
      <div className="h-full w-[3px] shrink-0 border-b-2 border-l border-b-[#76b9ed] border-l-[#2a2e26] bg-[#3b3f38]" />
      <Icon w={13} h={8} className="ml-[362px]">
        <path d="M1 7l5.500-5.500L12 7" strokeWidth={1.300} />
      </Icon>
      <Icon w={16} h={10} className="ml-[11px]">
        <path d="M.500 1h12.500v8H.500z" strokeWidth={1.200} />
        <path d="M2 2.500h5.500v5H2zM13.500 3.500h1.500v3h-1.500z" fill="currentColor" stroke="none" />
      </Icon>
      <Icon w={14} h={14} className="ml-[10px] mt-[2px]">
        <path d="M1 13C1 6.500 6 1.500 12.500 1.500M4 13c0-4.700 3.800-8.500 8.500-8.500M7 13c0-3 2.500-5.500 5.500-5.500M9.500 13c0-1.500 1.500-3 3-3" strokeWidth={1.100} />
        <circle cx="11.800" cy="12.300" r="1.200" fill="currentColor" stroke="none" />
      </Icon>
      <div className="ml-[9px] w-[24px] shrink-0 text-center text-[12px] leading-[17px] tracking-[-0.4px]">
        <div>ENG</div>
        <div>IN</div>
      </div>
      <div className="ml-[5px] w-[66px] shrink-0 text-center text-[12px] leading-[17px] tracking-[-0.35px] whitespace-nowrap">
        <div>1:13 AM</div>
        <div>10/14/2023</div>
      </div>
      <Icon w={16} h={17} className="ml-[11px]">
        <path d="M.700 1h14.600v12.500h-4.500L8 16l-2.800-2.500H.700z" strokeWidth={1.300} />
      </Icon>
      <div className="ml-[20px] h-full w-px shrink-0 bg-[#5b5e55]" />
    </footer>
  );
}

export default function App() {
  return (
    <div className="flex h-[768px] w-[1366px] flex-col overflow-hidden bg-white">
      <TitleBar />
      <MenuBar />
      <Toolbar />
      <div className="flex h-[593px] shrink-0">
        <Sidebar />
        <Canvas />
        <div className="w-[139px] shrink-0 bg-[#f4f4f4]" />
        <div className="ml-px flex w-[16px] shrink-0 flex-col items-center bg-[#f0f0f0]">
          <Chevron d={UP} className="mt-[5px] text-[#555]" />
          <div className="mt-[4px] h-[413px] w-full bg-[#cdcdcd]" />
          <Chevron d={DOWN} className="mt-auto mb-[4px] text-[#555]" />
        </div>
      </div>
      <SheetTabs />
      <StatusBar />
      <Taskbar />
    </div>
  );
}
